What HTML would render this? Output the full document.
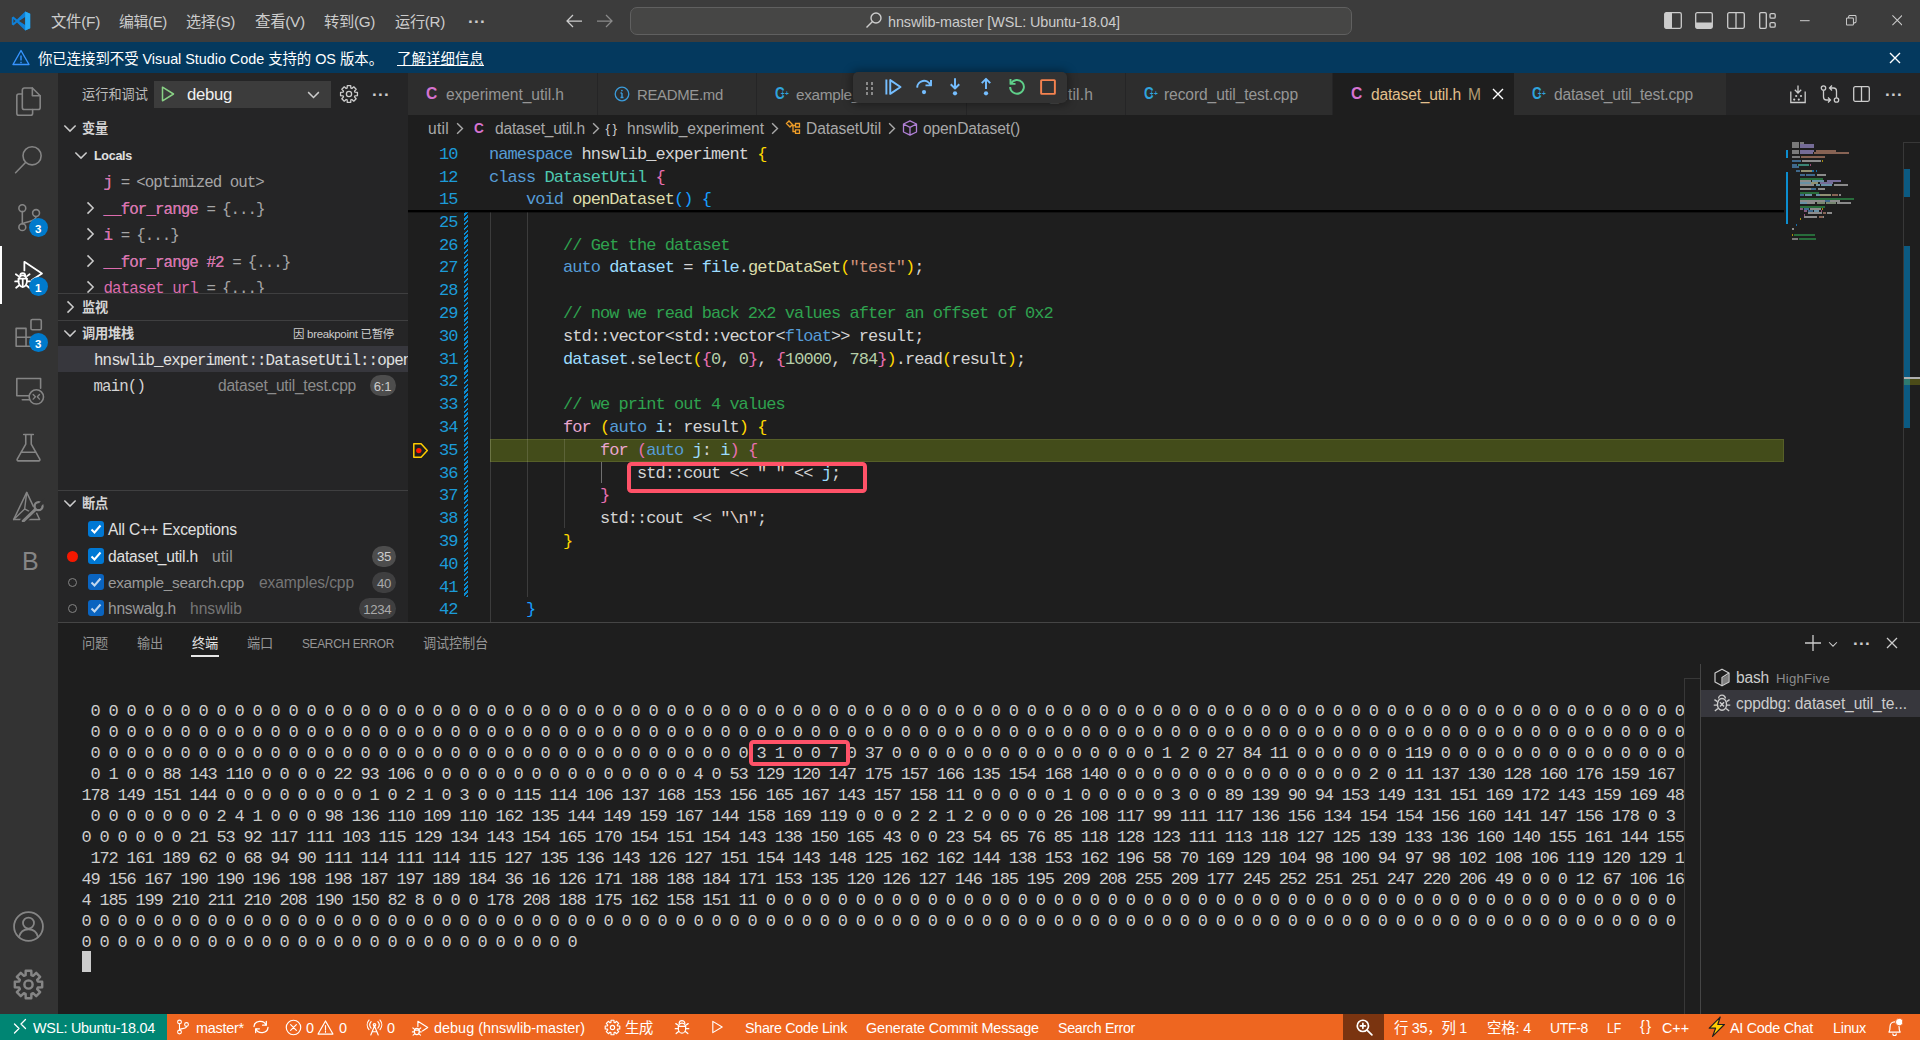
<!DOCTYPE html>
<html lang="zh-CN"><head><meta charset="utf-8"><title>dataset_util.h - hnswlib-master [WSL: Ubuntu-18.04] - Visual Studio Code</title>
<style>
html,body{margin:0;padding:0;background:#1e1e1e;}
body{width:1920px;height:1040px;position:relative;overflow:hidden;font-family:'Liberation Sans','Noto Sans CJK SC',sans-serif;}
body div,body span,body svg,body pre{position:absolute;}
span,pre{white-space:pre;margin:0;}
span span{position:static;}
</style></head><body>
<div style="left:0px;top:0px;width:1920px;height:42px;background:#3c3c3c;"></div>
<svg style="left:10.500px;top:10.800px" width="20" height="20" viewBox="0 0 100 100"><path d="M71 3 30 42 12 28 4 32v36l8 4 18-14 41 39 25-11V14zM12 60V40l11 10zm59 10L40 50l31-20z" fill="#0f80d8"/><path d="M71 3 96 14v72L71 97z" fill="#27aaf5"/></svg>
<span style="left:51px;top:11.0px;font-size:15.41px;line-height:22px;color:#cccccc;letter-spacing:-0.3px;">文件(F)</span>
<span style="left:119px;top:11.0px;font-size:14.85px;line-height:22px;color:#cccccc;letter-spacing:-0.3px;">编辑(E)</span>
<span style="left:186px;top:11.0px;font-size:15.15px;line-height:22px;color:#cccccc;letter-spacing:-0.3px;">选择(S)</span>
<span style="left:255px;top:11.0px;font-size:15.45px;line-height:22px;color:#cccccc;letter-spacing:-0.3px;">查看(V)</span>
<span style="left:324px;top:11.0px;font-size:15.25px;line-height:22px;color:#cccccc;letter-spacing:-0.3px;">转到(G)</span>
<span style="left:395px;top:11.0px;font-size:15.2px;line-height:22px;color:#cccccc;letter-spacing:-0.3px;">运行(R)</span>
<span style="left:468px;top:9.5px;font-size:17px;line-height:24px;color:#cccccc;letter-spacing:0.300px;font-weight:700;">···</span>
<svg style="left:565px;top:13px" width="18" height="16" viewBox="0 0 18 16" fill="none" stroke="#cccccc" stroke-width="1.250"><path d="M8 2 2 8l6 6M2 8h15"/></svg>
<svg style="left:596px;top:13px" width="18" height="16" viewBox="0 0 18 16" fill="none" stroke="#8a8a8a" stroke-width="1.250"><path d="M10 2l6 6-6 6M16 8H1"/></svg>
<div style="left:630px;top:7px;width:722px;height:28px;background:#464645;border:1px solid #606060;border-radius:7px;box-sizing:border-box;"></div>
<svg style="left:865px;top:11px" width="18" height="18" viewBox="0 0 18 18" fill="none" stroke="#cccccc" stroke-width="1.4"><circle cx="11" cy="7" r="5"/><path d="M7.5 10.5 1.5 16.5"/></svg>
<span style="left:888px;top:12.0px;font-size:14.4px;line-height:20px;color:#cccccc;letter-spacing:-0.093px;">hnswlib-master [WSL: Ubuntu-18.04]</span>
<svg style="left:1664px;top:12px" width="18" height="17" viewBox="0 0 18 17" fill="none" stroke="#cccccc" stroke-width="1.3"><rect x=".7" y=".7" width="16.6" height="15.6" rx="1.5"/><rect x="1" y="1" width="7" height="15" fill="#cccccc" stroke="none"/></svg>
<svg style="left:1695px;top:12px" width="18" height="17" viewBox="0 0 18 17" fill="none" stroke="#cccccc" stroke-width="1.3"><rect x=".7" y=".7" width="16.6" height="15.6" rx="1.5"/><rect x="1" y="10.500" width="16" height="5.500" fill="#cccccc" stroke="none"/></svg>
<svg style="left:1727px;top:12px" width="18" height="17" viewBox="0 0 18 17" fill="none" stroke="#cccccc" stroke-width="1.3"><rect x=".7" y=".7" width="16.6" height="15.6" rx="1.5"/><path d="M9 1v15"/></svg>
<svg style="left:1759px;top:12px" width="18" height="17" viewBox="0 0 18 17" fill="none" stroke="#cccccc" stroke-width="1.3"><rect x=".7" y=".7" width="6.6" height="15.6" rx="1.2"/><rect x="11" y="1.600" width="5.200" height="4.600" rx="1.200"/><rect x="11" y="10.600" width="5.200" height="4.600" rx="1.200"/></svg>
<svg style="left:1800px;top:15px" width="10.500" height="10.500" viewBox="0 0 12 12" stroke="#cccccc" stroke-width="1.150"><path d="M0 6.5h11"/></svg>
<svg style="left:1846px;top:15px" width="10.500" height="10.500" viewBox="0 0 12 12" fill="none" stroke="#cccccc" stroke-width="1.150"><rect x=".5" y="3.5" width="8" height="8" rx="1"/><path d="M3 3.5V2a1.5 1.5 0 0 1 1.5-1.5H10A1.5 1.5 0 0 1 11.500 2v5.500A1.500 1.500 0 0 1 10 9H8.500"/></svg>
<svg style="left:1891.800px;top:15px" width="10.500" height="10.500" viewBox="0 0 12 12" stroke="#cccccc" stroke-width="1.150"><path d="M.5.5l11 11M11.500.5l-11 11"/></svg>
<div style="left:0px;top:42px;width:1920px;height:31px;background:#04395e;"></div>
<svg style="left:12px;top:49px" width="18" height="17" viewBox="0 0 18 17" fill="none" stroke="#3794ff" stroke-width="1.4" stroke-linejoin="round"><path d="M9 1.500 17 15.500H1z"/><path d="M9 6.500v5M9 12.700v1.500"/></svg>
<span style="left:38px;top:49.0px;font-size:14.4px;line-height:20px;color:#ffffff;letter-spacing:-0.027px;">你已连接到不受 Visual Studio Code 支持的 OS 版本。</span>
<span style="left:397px;top:49.0px;font-size:14.4px;line-height:20px;color:#ffffff;letter-spacing:0.107px;text-decoration:underline;">了解详细信息</span>
<svg style="left:1889px;top:52px" width="12" height="12" viewBox="0 0 12 12" stroke="#ffffff" stroke-width="1.4"><path d="M1 1l10 10M11 1 1 11"/></svg>
<div style="left:0px;top:73px;width:58px;height:941px;background:#333333;"></div>
<svg style="left:12.3px;top:85.3px" width="33" height="33" viewBox="0 0 24 24" fill="none" stroke="#858585" stroke-width="1.15" stroke-linejoin="round" stroke-linecap="round"><path d="M14.800 2.200H9A1.500 1.500 0 0 0 7.500 3.700V16.300A1.500 1.500 0 0 0 9 17.800H19A1.500 1.500 0 0 0 20.500 16.300V7.800z"/><path d="M14.800 2.200V7.800H20.500"/><path d="M7.500 6.500H5A1.500 1.500 0 0 0 3.500 8V20.500A1.500 1.500 0 0 0 5 22H13.500A1.500 1.500 0 0 0 15 20.500V17.800"/></svg>
<svg style="left:12.3px;top:142.9px" width="33" height="33" viewBox="0 0 24 24" fill="none" stroke="#858585" stroke-width="1.15" stroke-linejoin="round" stroke-linecap="round"><circle cx="14.600" cy="9.300" r="6.600"/><path d="M10 14 2.600 21.600"/></svg>
<svg style="left:12.3px;top:200.5px" width="33" height="33" viewBox="0 0 24 24" fill="none" stroke="#858585" stroke-width="1.15" stroke-linejoin="round" stroke-linecap="round"><circle cx="7.500" cy="5.200" r="2.500"/><circle cx="7.500" cy="19" r="2.500"/><circle cx="17.500" cy="8.800" r="2.500"/><path d="M7.500 7.700v8.800M17.500 11.300c0 3.500-5 3.200-10 5.200"/></svg>
<div style="left:29.0px;top:217.5px;width:19px;height:19px;background:#007acc;border-radius:50%;"></div>
<span style="left:34.9px;top:221.5px;font-size:11.5px;line-height:14px;color:#ffffff;font-weight:700;">3</span>
<div style="left:0px;top:246px;width:2px;height:57.6px;background:#ffffff;"></div>
<svg style="left:12.3px;top:258.1px" width="33" height="33" viewBox="0 0 24 24" fill="none" stroke="#ffffff" stroke-width="1.3" stroke-linejoin="round" stroke-linecap="round"><path d="M9 9V2.800L21.800 11.200 14.500 16"/><ellipse cx="7.800" cy="16.800" rx="3.100" ry="4.200"/><path d="M4.700 15h6.200M7.800 15v6M4.700 13.200 2.800 11.800M10.900 13.200l1.900-1.400M4.700 17H2.300M10.900 17h2.400M5 20l-2 1.600M10.600 20l2 1.600M6 12.800a1.800 1.800 0 0 1 3.600 0"/></svg>
<div style="left:29.0px;top:276.5px;width:19px;height:19px;background:#007acc;border-radius:50%;"></div>
<span style="left:34.9px;top:280.5px;font-size:11.5px;line-height:14px;color:#ffffff;font-weight:700;">1</span>
<svg style="left:12.3px;top:315.7px" width="33" height="33" viewBox="0 0 24 24" fill="none" stroke="#858585" stroke-width="1.15" stroke-linejoin="round" stroke-linecap="round"><path d="M3 9h7.200v6.500H3zM3 15.500h7.200V22H3zM10.200 15.500h7V22h-7z"/><rect x="13.800" y="2.500" width="7.500" height="7.500" rx="1"/></svg>
<div style="left:29.0px;top:333.0px;width:19px;height:19px;background:#007acc;border-radius:50%;"></div>
<span style="left:34.9px;top:337.0px;font-size:11.5px;line-height:14px;color:#ffffff;font-weight:700;">3</span>
<svg style="left:12.3px;top:373.3px" width="33" height="33" viewBox="0 0 24 24" fill="none" stroke="#858585" stroke-width="1.15" stroke-linejoin="round" stroke-linecap="round"><path d="M15 16.500H3.500V4h17.300v7"/><path d="M7.500 19.500H12.500"/><circle cx="17.700" cy="17.400" r="5.200" fill="#333333"/><path d="M15.400 15.600l1.600 1.700-1.600 1.700M20 15.600l-1.600 1.700 1.600 1.700" stroke-width="1"/></svg>
<svg style="left:12.3px;top:430.9px" width="33" height="33" viewBox="0 0 24 24" fill="none" stroke="#858585" stroke-width="1.15" stroke-linejoin="round" stroke-linecap="round"><path d="M8.500 2.500h7M10 2.500v7L3.800 20.500a.8.800 0 0 0 .7 1.200h15a.8.800 0 0 0 .7-1.200L14 9.500v-7M6.500 15.500h11"/></svg>
<svg style="left:12.3px;top:488.5px" width="33" height="33" viewBox="0 0 24 24" fill="none" stroke="#858585" stroke-width="1.15" stroke-linejoin="round" stroke-linecap="round"><path d="M10.700 2.500 1.200 22.200H20.100z" stroke-width="1.100"/><path d="M10.700 2.500 9.200 14.500 1.200 22.200M9.200 14.500l7 3.700" stroke-width="1"/><path d="M8.200 23.300 17.300 14.600" stroke="#333333" stroke-width="4.600"/><path d="M8.200 23.300 17.300 14.600" stroke-width="2.200"/><circle cx="19.300" cy="12.500" r="2.900" fill="#333333" stroke-width="1.700"/><path d="M19.800 12 23.500 8.300" stroke="#333333" stroke-width="2.600"/></svg>
<span style="left:22px;top:546.1px;font-size:25px;line-height:30px;color:#858585;">B</span>
<svg style="left:12.3px;top:909.5px" width="33" height="33" viewBox="0 0 24 24" fill="none" stroke="#858585" stroke-width="1.3" stroke-linejoin="round" stroke-linecap="round"><circle cx="12" cy="12" r="10.500"/><circle cx="12" cy="9.500" r="4"/><path d="M5 19.800c1-4 4-5.800 7-5.800s6 1.800 7 5.800"/></svg>
<svg style="left:13.3px;top:968.5px" width="31" height="31" viewBox="0 0 24 24" fill="none" stroke="#858585" stroke-width="1.9" stroke-linejoin="round" stroke-linecap="round"><path d="M9.75 4.74 L9.85 1.42 L14.15 1.42 L14.25 4.74 L15.55 5.28 L17.97 3.00 L21.00 6.03 L18.72 8.45 L19.26 9.75 L22.58 9.85 L22.58 14.15 L19.26 14.25 L18.72 15.55 L21.00 17.97 L17.97 21.00 L15.55 18.72 L14.25 19.26 L14.15 22.58 L9.85 22.58 L9.75 19.26 L8.45 18.72 L6.03 21.00 L3.00 17.97 L5.28 15.55 L4.74 14.25 L1.42 14.15 L1.42 9.85 L4.74 9.75 L5.28 8.45 L3.00 6.03 L6.03 3.00 L8.45 5.28Z" stroke-width="1.900"/><path d="M12 8.800a3.200 3.200 0 1 0 0 6.400 3.200 3.200 0 0 0 0-6.400z" stroke-width="1.900"/></svg>
<div style="left:58px;top:73px;width:350px;height:549px;background:#252526;"></div>
<span style="left:82px;top:86.0px;font-size:13.2px;line-height:18px;color:#bbbbbb;letter-spacing:0.013px;">运行和调试</span>
<div style="left:154px;top:81px;width:177px;height:27px;background:#3c3c3c;"></div>
<svg style="left:160px;top:85px" width="16" height="18" viewBox="0 0 16 18" fill="none" stroke="#89d185" stroke-width="1.500" stroke-linejoin="round"><path d="M2.500 2.200v13.600L13.500 9z"/></svg>
<span style="left:187px;top:83.0px;font-size:16.72px;line-height:24px;color:#f0f0f0;letter-spacing:-0.3px;">debug</span>
<svg style="left:304.0px;top:84.5px" width="19" height="19" viewBox="0 0 16 16" fill="none" stroke="#cccccc" stroke-width="1.200"><path d="M3.500 6l4.500 4.500L12.500 6"/></svg>
<svg style="left:339px;top:84px" width="20" height="20" viewBox="0 0 20 20" fill="none" stroke="#cccccc" stroke-width="1.300" stroke-linejoin="round"><path d="M8.17 4.08 L8.29 1.57 L11.71 1.57 L11.83 4.08 L12.89 4.52 L14.75 2.83 L17.17 5.25 L15.48 7.11 L15.92 8.17 L18.43 8.29 L18.43 11.71 L15.92 11.83 L15.48 12.89 L17.17 14.75 L14.75 17.17 L12.89 15.48 L11.83 15.92 L11.71 18.43 L8.29 18.43 L8.17 15.92 L7.11 15.48 L5.25 17.17 L2.83 14.75 L4.52 12.89 L4.08 11.83 L1.57 11.71 L1.57 8.29 L4.08 8.17 L4.52 7.11 L2.83 5.25 L5.25 2.83 L7.11 4.52Z"/><circle cx="10" cy="10" r="2.600"/></svg>
<span style="left:372px;top:82.5px;font-size:17px;line-height:24px;color:#cccccc;letter-spacing:0.300px;font-weight:700;">···</span>
<svg style="left:60.0px;top:118.0px" width="20" height="20" viewBox="0 0 16 16" fill="none" stroke="#cccccc" stroke-width="1.200"><path d="M3.500 6l4.500 4.500L12.500 6"/></svg>
<span style="left:82px;top:120.0px;font-size:13.2px;line-height:18px;color:#d4d4d4;font-weight:700;letter-spacing:-0.188px;">变量</span>
<svg style="left:71.0px;top:145.0px" width="20" height="20" viewBox="0 0 16 16" fill="none" stroke="#cccccc" stroke-width="1.200"><path d="M3.500 6l4.500 4.500L12.500 6"/></svg>
<span style="left:94px;top:147.0px;font-size:12.57px;line-height:18px;color:#e0e0e0;font-weight:700;letter-spacing:-0.3px;">Locals</span>
<span style="left:103.5px;top:171.8px;font-size:15.8px;line-height:22px;color:#a6a6a6;font-family:'Liberation Mono','Noto Sans CJK SC',monospace;letter-spacing:-0.900px;">j =</span>
<span style="left:103.5px;top:171.8px;font-size:15.8px;line-height:22px;color:#dd6cae;font-family:'Liberation Mono','Noto Sans CJK SC',monospace;letter-spacing:-0.900px;">j</span>
<span style="left:136.22px;top:171.8px;font-size:15.8px;line-height:22px;color:#a6a6a6;font-family:'Liberation Mono','Noto Sans CJK SC',monospace;letter-spacing:-0.980px;">&lt;optimized out&gt;</span>
<svg style="left:80.0px;top:198.0px" width="20" height="20" viewBox="0 0 16 16" fill="none" stroke="#cccccc" stroke-width="1.200"><path d="M6 3.500l4.500 4.500L6 12.500"/></svg>
<span style="left:103.5px;top:198.8px;font-size:15.8px;line-height:22px;color:#a6a6a6;font-family:'Liberation Mono','Noto Sans CJK SC',monospace;letter-spacing:-0.900px;">__for_range =</span>
<span style="left:103.5px;top:198.8px;font-size:15.8px;line-height:22px;color:#dd6cae;font-family:'Liberation Mono','Noto Sans CJK SC',monospace;letter-spacing:-0.900px;">__for_range</span>
<span style="left:222.02px;top:198.8px;font-size:15.8px;line-height:22px;color:#a6a6a6;font-family:'Liberation Mono','Noto Sans CJK SC',monospace;letter-spacing:-0.980px;">{...}</span>
<svg style="left:80.0px;top:224.0px" width="20" height="20" viewBox="0 0 16 16" fill="none" stroke="#cccccc" stroke-width="1.200"><path d="M6 3.500l4.500 4.500L6 12.500"/></svg>
<span style="left:103.5px;top:224.8px;font-size:15.8px;line-height:22px;color:#a6a6a6;font-family:'Liberation Mono','Noto Sans CJK SC',monospace;letter-spacing:-0.900px;">i =</span>
<span style="left:103.5px;top:224.8px;font-size:15.8px;line-height:22px;color:#dd6cae;font-family:'Liberation Mono','Noto Sans CJK SC',monospace;letter-spacing:-0.900px;">i</span>
<span style="left:136.22px;top:224.8px;font-size:15.8px;line-height:22px;color:#a6a6a6;font-family:'Liberation Mono','Noto Sans CJK SC',monospace;letter-spacing:-0.980px;">{...}</span>
<svg style="left:80.0px;top:251.0px" width="20" height="20" viewBox="0 0 16 16" fill="none" stroke="#cccccc" stroke-width="1.200"><path d="M6 3.500l4.500 4.500L6 12.500"/></svg>
<span style="left:103.5px;top:251.8px;font-size:15.8px;line-height:22px;color:#a6a6a6;font-family:'Liberation Mono','Noto Sans CJK SC',monospace;letter-spacing:-0.900px;">__for_range #2 =</span>
<span style="left:103.5px;top:251.8px;font-size:15.8px;line-height:22px;color:#dd6cae;font-family:'Liberation Mono','Noto Sans CJK SC',monospace;letter-spacing:-0.900px;">__for_range #2</span>
<span style="left:247.76000000000002px;top:251.8px;font-size:15.8px;line-height:22px;color:#a6a6a6;font-family:'Liberation Mono','Noto Sans CJK SC',monospace;letter-spacing:-0.980px;">{...}</span>
<div style="left:58px;top:274px;width:350px;height:19px;overflow:hidden">
<svg style="left:22px;top:3px" width="20" height="20" viewBox="0 0 16 16" fill="none" stroke="#cccccc" stroke-width="1.200"><path d="M6 3.500l4.500 4.500L6 12.500"/></svg>
<span style="left:45.500px;top:4.800px;font-size:15.8px;line-height:20px;color:#a6a6a6;font-family:'Liberation Mono','Noto Sans CJK SC',monospace;letter-spacing:-0.900px"><span style="color:#dd6cae">dataset_url</span> =<span style="margin-left:7px;letter-spacing:-0.980px">{...}</span></span>
</div>
<div style="left:58px;top:293px;width:350px;height:1px;background:#3f3f40;"></div>
<svg style="left:60.0px;top:296.5px" width="20" height="20" viewBox="0 0 16 16" fill="none" stroke="#cccccc" stroke-width="1.200"><path d="M6 3.500l4.500 4.500L6 12.500"/></svg>
<span style="left:82px;top:298.5px;font-size:13.2px;line-height:18px;color:#d4d4d4;font-weight:700;letter-spacing:-0.188px;">监视</span>
<div style="left:58px;top:319.5px;width:350px;height:1px;background:#3f3f40;"></div>
<svg style="left:60.0px;top:323.0px" width="20" height="20" viewBox="0 0 16 16" fill="none" stroke="#cccccc" stroke-width="1.200"><path d="M3.500 6l4.500 4.500L12.500 6"/></svg>
<span style="left:82px;top:325.0px;font-size:13.2px;line-height:18px;color:#d4d4d4;font-weight:700;letter-spacing:-0.188px;">调用堆栈</span>
<span style="left:293px;top:325.5px;font-size:11.47px;line-height:17px;color:#cccccc;letter-spacing:-0.3px;">因 breakpoint 已暂停</span>
<div style="left:58px;top:346px;width:350px;height:26px;background:#37373d;"></div>
<div style="left:94px;top:346px;width:314px;height:26px;overflow:hidden"><span style="left:0;top:5.300px;font-size:15.8px;line-height:20px;color:#e0e0e0;font-family:'Liberation Mono','Noto Sans CJK SC',monospace;letter-spacing:-0.900px">hnswlib_experiment::DatasetUtil::openDataset()</span></div>
<span style="left:93.5px;top:376.0px;font-size:15.8px;line-height:22px;color:#d4d4d4;font-family:'Liberation Mono','Noto Sans CJK SC',monospace;letter-spacing:-0.900px;">main()</span>
<span style="left:218px;top:375.0px;font-size:15.6px;line-height:22px;color:#8c8c8c;letter-spacing:-0.24px;">dataset_util_test.cpp</span>
<div style="left:369.5px;top:375.0px;width:26.0px;height:21px;background:#4d4d4d;border-radius:10.500px;"></div>
<span style="left:369.5px;top:377.5px;font-size:13.2px;line-height:18px;color:#cccccc;width:26.0px;text-align:center;letter-spacing:-0.300px;">6:1</span>
<div style="left:58px;top:490px;width:350px;height:1px;background:#3f3f40;"></div>
<svg style="left:60.0px;top:493.0px" width="20" height="20" viewBox="0 0 16 16" fill="none" stroke="#cccccc" stroke-width="1.200"><path d="M3.500 6l4.500 4.500L12.500 6"/></svg>
<span style="left:82px;top:495.0px;font-size:13.2px;line-height:18px;color:#d4d4d4;font-weight:700;letter-spacing:-0.188px;">断点</span>
<div style="left:88px;top:521px;width:16px;height:16px;background:#0078d4;border-radius:3px;"></div>
<svg style="left:88px;top:521px;opacity:1" width="16" height="16" viewBox="0 0 16 16" fill="none" stroke="#ffffff" stroke-width="2"><path d="M3.500 8.500l3 3L12.500 4.500"/></svg>
<span style="left:108px;top:519.0px;font-size:15.6px;line-height:22px;color:#e0e0e0;letter-spacing:-0.153px;">All C++ Exceptions</span>
<div style="left:66.5px;top:550.5px;width:11px;height:11px;background:#f51800;border-radius:50%;"></div>
<div style="left:88px;top:548px;width:16px;height:16px;background:#0078d4;border-radius:3px;"></div>
<svg style="left:88px;top:548px;opacity:1" width="16" height="16" viewBox="0 0 16 16" fill="none" stroke="#ffffff" stroke-width="2"><path d="M3.500 8.500l3 3L12.500 4.500"/></svg>
<span style="left:108px;top:546.0px;font-size:15.6px;line-height:22px;color:#e0e0e0;letter-spacing:-0.198px;">dataset_util.h</span>
<span style="left:212px;top:546.0px;font-size:15.6px;line-height:22px;color:#999999;letter-spacing:0.266px;">util</span>
<div style="left:372px;top:545.5px;width:24px;height:21px;background:#4d4d4d;border-radius:10.500px;"></div>
<span style="left:372px;top:548.0px;font-size:13.2px;line-height:18px;color:#cccccc;width:24px;text-align:center;letter-spacing:-0.300px;">35</span>
<div style="left:68px;top:578px;width:7px;height:7px;background:transparent;border:1.500px solid #848484;border-radius:50%;"></div>
<div style="left:88px;top:574px;width:16px;height:16px;background:#0a64c0;border-radius:3px;"></div>
<svg style="left:88px;top:574px;opacity:0.75" width="16" height="16" viewBox="0 0 16 16" fill="none" stroke="#ffffff" stroke-width="2"><path d="M3.500 8.500l3 3L12.500 4.500"/></svg>
<span style="left:108px;top:572.0px;font-size:15.33px;line-height:22px;color:#9a9a9a;letter-spacing:-0.3px;">example_search.cpp</span>
<span style="left:259px;top:572.0px;font-size:15.6px;line-height:22px;color:#767676;letter-spacing:-0.102px;">examples/cpp</span>
<div style="left:372px;top:572.0px;width:24px;height:21px;background:#3f3f40;border-radius:10.500px;"></div>
<span style="left:372px;top:574.5px;font-size:13.2px;line-height:18px;color:#aaaaaa;width:24px;text-align:center;letter-spacing:-0.300px;">40</span>
<div style="left:68px;top:604px;width:7px;height:7px;background:transparent;border:1.500px solid #848484;border-radius:50%;"></div>
<div style="left:88px;top:600px;width:16px;height:16px;background:#0a64c0;border-radius:3px;"></div>
<svg style="left:88px;top:600px;opacity:0.75" width="16" height="16" viewBox="0 0 16 16" fill="none" stroke="#ffffff" stroke-width="2"><path d="M3.500 8.500l3 3L12.500 4.500"/></svg>
<span style="left:108px;top:598.0px;font-size:15.6px;line-height:22px;color:#9a9a9a;letter-spacing:-0.247px;">hnswalg.h</span>
<span style="left:190px;top:598.0px;font-size:15.6px;line-height:22px;color:#767676;letter-spacing:-0.002px;">hnswlib</span>
<div style="left:358.5px;top:598.0px;width:37.5px;height:21px;background:#3f3f40;border-radius:10.500px;"></div>
<span style="left:358.5px;top:600.5px;font-size:13.2px;line-height:18px;color:#aaaaaa;width:37.5px;text-align:center;letter-spacing:-0.300px;">1234</span>
<div style="left:408px;top:73px;width:1512px;height:42px;background:#252526;"></div>
<div style="left:408px;top:73px;width:189px;height:42px;background:#2d2d2d;"></div>
<span style="left:425.7px;top:82.0px;font-size:16.8px;line-height:24px;color:#d673d0;font-weight:700;transform:scaleX(.93);transform-origin:0 50%;">C</span>
<span style="left:446px;top:84.0px;font-size:15.6px;line-height:22px;color:#969696;letter-spacing:-0.045px;">experiment_util.h</span>
<div style="left:598px;top:73px;width:158px;height:42px;background:#2d2d2d;"></div>
<svg style="left:614px;top:86px" width="16" height="16" viewBox="0 0 16 16" fill="none" stroke="#3b9bd9" stroke-width="1.300"><circle cx="8" cy="8" r="6.800"/><path d="M8 7v4.500M6.500 7H8M6.500 11.500h3" stroke-width="1.400"/><circle cx="7.900" cy="4.600" r=".9" fill="#3b9bd9" stroke="none"/></svg>
<span style="left:637px;top:84.0px;font-size:14.92px;line-height:22px;color:#969696;letter-spacing:-0.3px;">README.md</span>
<div style="left:757px;top:73px;width:209px;height:42px;background:#2d2d2d;"></div>
<span style="left:774.9000000000001px;top:81.8px;font-size:16.8px;line-height:24px;color:#2fa3dc;font-weight:700;transform:scaleX(.8);transform-origin:0 50%;">C</span>
<span style="left:780.7px;top:89.8px;font-size:6.5px;line-height:8px;color:#2fa3dc;font-weight:700;">+</span>
<span style="left:785.0px;top:89.8px;font-size:6.5px;line-height:8px;color:#2fa3dc;font-weight:700;">+</span>
<span style="left:796px;top:84.0px;font-size:15.33px;line-height:22px;color:#969696;letter-spacing:-0.3px;">example_search.cpp</span>
<div style="left:967px;top:73px;width:158px;height:42px;background:#2d2d2d;"></div>
<span style="left:984.7px;top:82.0px;font-size:16.8px;line-height:24px;color:#d673d0;font-weight:700;transform:scaleX(.93);transform-origin:0 50%;">C</span>
<span style="left:1005px;top:84.0px;font-size:15.6px;line-height:22px;color:#969696;letter-spacing:0.168px;">record_util.h</span>
<div style="left:1126px;top:73px;width:206px;height:42px;background:#2d2d2d;"></div>
<span style="left:1143.9px;top:81.8px;font-size:16.8px;line-height:24px;color:#2fa3dc;font-weight:700;transform:scaleX(.8);transform-origin:0 50%;">C</span>
<span style="left:1149.7px;top:89.8px;font-size:6.5px;line-height:8px;color:#2fa3dc;font-weight:700;">+</span>
<span style="left:1154.0px;top:89.8px;font-size:6.5px;line-height:8px;color:#2fa3dc;font-weight:700;">+</span>
<span style="left:1164px;top:84.0px;font-size:15.6px;line-height:22px;color:#969696;letter-spacing:-0.105px;">record_util_test.cpp</span>
<div style="left:1333px;top:73px;width:181px;height:42px;background:#1e1e1e;"></div>
<span style="left:1350.9px;top:82.0px;font-size:16.8px;line-height:24px;color:#d673d0;font-weight:700;transform:scaleX(.93);transform-origin:0 50%;">C</span>
<span style="left:1371px;top:84.0px;font-size:15.6px;line-height:22px;color:#e2c08d;letter-spacing:-0.198px;">dataset_util.h</span>
<div style="left:1514px;top:73px;width:212px;height:42px;background:#2d2d2d;"></div>
<span style="left:1531.9px;top:81.8px;font-size:16.8px;line-height:24px;color:#2fa3dc;font-weight:700;transform:scaleX(.8);transform-origin:0 50%;">C</span>
<span style="left:1537.7px;top:89.8px;font-size:6.5px;line-height:8px;color:#2fa3dc;font-weight:700;">+</span>
<span style="left:1542.0px;top:89.8px;font-size:6.5px;line-height:8px;color:#2fa3dc;font-weight:700;">+</span>
<span style="left:1554px;top:84.0px;font-size:15.6px;line-height:22px;color:#969696;letter-spacing:-0.193px;">dataset_util_test.cpp</span>
<span style="left:1468px;top:84.0px;font-size:15.6px;line-height:22px;color:#b39a72;">M</span>
<svg style="left:1491px;top:87px" width="14" height="14" viewBox="0 0 14 14" stroke="#ffffff" stroke-width="1.400"><path d="M2 2l10 10M12 2 2 12"/></svg>
<svg style="left:1788px;top:84px" width="20" height="20" viewBox="0 0 20 20" fill="none" stroke="#cccccc" stroke-width="1.300"><path d="M10 1.500v7.500M6.800 5.800 10 9l3.200-3.200M2.800 7.500v11h14.400v-11"/><g fill="#cccccc" stroke="none"><circle cx="8.200" cy="12" r="1.100"/><circle cx="13" cy="12" r="1.100"/><circle cx="6.200" cy="15.600" r="1.100"/><circle cx="10.800" cy="15.600" r="1.100"/></g></svg>
<svg style="left:1819px;top:84px" width="22" height="20" viewBox="0 0 22 20" fill="none" stroke="#cccccc" stroke-width="1.300"><circle cx="4.500" cy="4" r="2.200"/><circle cx="17.500" cy="16" r="2.200"/><path d="M4.500 6.200V13a3 3 0 0 0 3 3h3.500M9 13.500l2.500 2.500L9 18.500M17.500 13.800V7a3 3 0 0 0-3-3H11M13 1.500 10.500 4 13 6.500"/></svg>
<svg style="left:1853px;top:86px" width="17" height="16" viewBox="0 0 17 16" fill="none" stroke="#cccccc" stroke-width="1.300"><rect x=".7" y=".7" width="15.600" height="14.600" rx="1.500"/><path d="M8.500 1v14"/></svg>
<span style="left:1885px;top:82.5px;font-size:17px;line-height:24px;color:#cccccc;letter-spacing:0.300px;font-weight:700;">···</span>
<div style="left:408px;top:115px;width:1512px;height:26px;background:#1e1e1e;"></div>
<span style="left:428px;top:118.0px;font-size:15.6px;line-height:22px;color:#a9a9a9;letter-spacing:0.266px;">util</span>
<svg style="left:449.5px;top:119.0px" width="19" height="19" viewBox="0 0 16 16" fill="none" stroke="#a9a9a9" stroke-width="1.200"><path d="M6 3.500l4.500 4.500L6 12.500"/></svg>
<span style="left:473.5px;top:117.8px;font-size:14.6px;line-height:20px;color:#d673d0;font-weight:700;transform:scaleX(.93);transform-origin:0 50%;">C</span>
<span style="left:495px;top:118.0px;font-size:15.6px;line-height:22px;color:#a9a9a9;letter-spacing:-0.198px;">dataset_util.h</span>
<svg style="left:585.5px;top:119.0px" width="19" height="19" viewBox="0 0 16 16" fill="none" stroke="#a9a9a9" stroke-width="1.200"><path d="M6 3.500l4.500 4.500L6 12.500"/></svg>
<span style="left:605.5px;top:119.0px;font-size:13.5px;line-height:19px;color:#cccccc;letter-spacing:2.500px;">{}</span>
<span style="left:627px;top:118.0px;font-size:15.6px;line-height:22px;color:#a9a9a9;letter-spacing:-0.046px;">hnswlib_experiment</span>
<svg style="left:764.5px;top:119.0px" width="19" height="19" viewBox="0 0 16 16" fill="none" stroke="#a9a9a9" stroke-width="1.200"><path d="M6 3.500l4.500 4.500L6 12.500"/></svg>
<svg style="left:784px;top:119px" width="18" height="18" viewBox="0 0 18 18" fill="none" stroke="#ee9d28" stroke-width="1.300"><path d="M2.500 4.500 5 2l3.500 3.500L6 8zM6.500 6.500h5M9 6.500v6h2.500M11.500 4.500h4v3.500h-4zM11.500 10.800h4v3.500h-4z"/></svg>
<span style="left:806px;top:118.0px;font-size:15.6px;line-height:22px;color:#a9a9a9;letter-spacing:-0.115px;">DatasetUtil</span>
<svg style="left:881.5px;top:119.0px" width="19" height="19" viewBox="0 0 16 16" fill="none" stroke="#a9a9a9" stroke-width="1.200"><path d="M6 3.500l4.500 4.500L6 12.500"/></svg>
<svg style="left:901px;top:119px" width="18" height="18" viewBox="0 0 18 18" fill="none" stroke="#b180d7" stroke-width="1.300" stroke-linejoin="round"><path d="M9 1.800 15.500 5v8L9 16.200 2.500 13V5zM2.500 5 9 8.300 15.500 5M9 8.300v7.900"/></svg>
<span style="left:923px;top:118.0px;font-size:15.6px;line-height:22px;color:#a9a9a9;letter-spacing:-0.141px;">openDataset()</span>
<div style="left:490px;top:439px;width:1294px;height:23px;background:#434c1a;border:1px solid #565f28;box-sizing:border-box;"></div>
<div style="left:490px;top:210px;width:1px;height:412px;background:rgba(255,255,255,.135);"></div>
<div style="left:527px;top:210px;width:1px;height:386.70000000000005px;background:rgba(255,255,255,.135);"></div>
<div style="left:564px;top:439px;width:1px;height:89.29999999999995px;background:rgba(255,255,255,.135);"></div>
<div style="left:601px;top:462px;width:1px;height:20.700000000000045px;background:#707070;"></div>
<div style="left:464px;top:210px;width:4px;height:386.7px;background:repeating-linear-gradient(-45deg,#0a8ad0 0 1.700px,transparent 1.700px 3.400px)"></div>
<span style="left:439.02px;top:211.8px;font-size:17px;line-height:22px;color:#1c9bd8;font-family:'Liberation Mono','Noto Sans CJK SC',monospace;letter-spacing:-0.960px;">25</span>
<span style="left:439.02px;top:234.6px;font-size:17px;line-height:22px;color:#1c9bd8;font-family:'Liberation Mono','Noto Sans CJK SC',monospace;letter-spacing:-0.960px;">26</span>
<span style="left:489.1px;top:234.6px;font-size:17px;line-height:22px;color:#d4d4d4;font-family:'Liberation Mono','Noto Sans CJK SC',monospace;letter-spacing:-0.960px"><span style="color:#2fa24f">        // Get the dataset</span></span>
<span style="left:439.02px;top:257.4px;font-size:17px;line-height:22px;color:#1c9bd8;font-family:'Liberation Mono','Noto Sans CJK SC',monospace;letter-spacing:-0.960px;">27</span>
<span style="left:489.1px;top:257.4px;font-size:17px;line-height:22px;color:#d4d4d4;font-family:'Liberation Mono','Noto Sans CJK SC',monospace;letter-spacing:-0.960px">        <span style="color:#569cd6">auto</span> <span style="color:#9cdcfe">dataset</span> = <span style="color:#9cdcfe">file</span>.<span style="color:#dcdcaa">getDataSet</span><span style="color:#ffd700">(</span><span style="color:#ce9178">"test"</span><span style="color:#ffd700">)</span>;</span>
<span style="left:439.02px;top:280.2px;font-size:17px;line-height:22px;color:#1c9bd8;font-family:'Liberation Mono','Noto Sans CJK SC',monospace;letter-spacing:-0.960px;">28</span>
<span style="left:439.02px;top:303.0px;font-size:17px;line-height:22px;color:#1c9bd8;font-family:'Liberation Mono','Noto Sans CJK SC',monospace;letter-spacing:-0.960px;">29</span>
<span style="left:489.1px;top:303.0px;font-size:17px;line-height:22px;color:#d4d4d4;font-family:'Liberation Mono','Noto Sans CJK SC',monospace;letter-spacing:-0.960px"><span style="color:#2fa24f">        // now we read back 2x2 values after an offset of 0x2</span></span>
<span style="left:439.02px;top:325.8px;font-size:17px;line-height:22px;color:#1c9bd8;font-family:'Liberation Mono','Noto Sans CJK SC',monospace;letter-spacing:-0.960px;">30</span>
<span style="left:489.1px;top:325.8px;font-size:17px;line-height:22px;color:#d4d4d4;font-family:'Liberation Mono','Noto Sans CJK SC',monospace;letter-spacing:-0.960px">        std::vector&lt;std::vector&lt;<span style="color:#569cd6">float</span>&gt;&gt; result;</span>
<span style="left:439.02px;top:348.6px;font-size:17px;line-height:22px;color:#1c9bd8;font-family:'Liberation Mono','Noto Sans CJK SC',monospace;letter-spacing:-0.960px;">31</span>
<span style="left:489.1px;top:348.6px;font-size:17px;line-height:22px;color:#d4d4d4;font-family:'Liberation Mono','Noto Sans CJK SC',monospace;letter-spacing:-0.960px">        <span style="color:#9cdcfe">dataset</span>.select<span style="color:#ffd700">(</span><span style="color:#e86fb0">{</span><span style="color:#b5cea8">0</span>, <span style="color:#b5cea8">0</span><span style="color:#e86fb0">}</span>, <span style="color:#e86fb0">{</span><span style="color:#b5cea8">10000</span>, <span style="color:#b5cea8">784</span><span style="color:#e86fb0">}</span><span style="color:#ffd700">)</span>.read<span style="color:#ffd700">(</span>result<span style="color:#ffd700">)</span>;</span>
<span style="left:439.02px;top:371.4px;font-size:17px;line-height:22px;color:#1c9bd8;font-family:'Liberation Mono','Noto Sans CJK SC',monospace;letter-spacing:-0.960px;">32</span>
<span style="left:439.02px;top:394.2px;font-size:17px;line-height:22px;color:#1c9bd8;font-family:'Liberation Mono','Noto Sans CJK SC',monospace;letter-spacing:-0.960px;">33</span>
<span style="left:489.1px;top:394.2px;font-size:17px;line-height:22px;color:#d4d4d4;font-family:'Liberation Mono','Noto Sans CJK SC',monospace;letter-spacing:-0.960px"><span style="color:#2fa24f">        // we print out 4 values</span></span>
<span style="left:439.02px;top:417.0px;font-size:17px;line-height:22px;color:#1c9bd8;font-family:'Liberation Mono','Noto Sans CJK SC',monospace;letter-spacing:-0.960px;">34</span>
<span style="left:489.1px;top:417.0px;font-size:17px;line-height:22px;color:#d4d4d4;font-family:'Liberation Mono','Noto Sans CJK SC',monospace;letter-spacing:-0.960px">        <span style="color:#eba6cf">for</span> <span style="color:#ffd700">(</span><span style="color:#569cd6">auto</span> <span style="color:#9cdcfe">i</span>: result<span style="color:#ffd700">)</span> <span style="color:#ffd700">{</span></span>
<span style="left:439.02px;top:439.8px;font-size:17px;line-height:22px;color:#1c9bd8;font-family:'Liberation Mono','Noto Sans CJK SC',monospace;letter-spacing:-0.960px;">35</span>
<span style="left:489.1px;top:439.8px;font-size:17px;line-height:22px;color:#d4d4d4;font-family:'Liberation Mono','Noto Sans CJK SC',monospace;letter-spacing:-0.960px">            <span style="color:#eba6cf">for</span> <span style="color:#e86fb0">(</span><span style="color:#569cd6">auto</span> <span style="color:#9cdcfe">j</span>: <span style="color:#9cdcfe">i</span><span style="color:#e86fb0">)</span> <span style="color:#e86fb0">{</span></span>
<span style="left:439.02px;top:462.6px;font-size:17px;line-height:22px;color:#1c9bd8;font-family:'Liberation Mono','Noto Sans CJK SC',monospace;letter-spacing:-0.960px;">36</span>
<span style="left:489.1px;top:462.6px;font-size:17px;line-height:22px;color:#d4d4d4;font-family:'Liberation Mono','Noto Sans CJK SC',monospace;letter-spacing:-0.960px">                std::cout &lt;&lt; <span style="color:#e0d0c8">" "</span> &lt;&lt; <span style="color:#9cdcfe">j</span>;</span>
<span style="left:439.02px;top:485.4px;font-size:17px;line-height:22px;color:#1c9bd8;font-family:'Liberation Mono','Noto Sans CJK SC',monospace;letter-spacing:-0.960px;">37</span>
<span style="left:489.1px;top:485.4px;font-size:17px;line-height:22px;color:#d4d4d4;font-family:'Liberation Mono','Noto Sans CJK SC',monospace;letter-spacing:-0.960px">            <span style="color:#e86fb0">}</span></span>
<span style="left:439.02px;top:508.2px;font-size:17px;line-height:22px;color:#1c9bd8;font-family:'Liberation Mono','Noto Sans CJK SC',monospace;letter-spacing:-0.960px;">38</span>
<span style="left:489.1px;top:508.2px;font-size:17px;line-height:22px;color:#d4d4d4;font-family:'Liberation Mono','Noto Sans CJK SC',monospace;letter-spacing:-0.960px">            std::cout &lt;&lt; <span style="color:#e0d0c8">"\n"</span>;</span>
<span style="left:439.02px;top:531.0px;font-size:17px;line-height:22px;color:#1c9bd8;font-family:'Liberation Mono','Noto Sans CJK SC',monospace;letter-spacing:-0.960px;">39</span>
<span style="left:489.1px;top:531.0px;font-size:17px;line-height:22px;color:#d4d4d4;font-family:'Liberation Mono','Noto Sans CJK SC',monospace;letter-spacing:-0.960px">        <span style="color:#ffd700">}</span></span>
<span style="left:439.02px;top:553.8px;font-size:17px;line-height:22px;color:#1c9bd8;font-family:'Liberation Mono','Noto Sans CJK SC',monospace;letter-spacing:-0.960px;">40</span>
<span style="left:439.02px;top:576.6px;font-size:17px;line-height:22px;color:#1c9bd8;font-family:'Liberation Mono','Noto Sans CJK SC',monospace;letter-spacing:-0.960px;">41</span>
<span style="left:439.02px;top:599.4px;font-size:17px;line-height:22px;color:#1c9bd8;font-family:'Liberation Mono','Noto Sans CJK SC',monospace;letter-spacing:-0.960px;">42</span>
<span style="left:489.1px;top:599.4px;font-size:17px;line-height:22px;color:#d4d4d4;font-family:'Liberation Mono','Noto Sans CJK SC',monospace;letter-spacing:-0.960px">    <span style="color:#179fff">}</span></span>
<svg style="left:412px;top:441.7px" width="18" height="17" viewBox="0 0 18 17" fill="none"><path d="M1.800 1.700h7.300L15.300 8.500 9.100 15.300H1.800z" stroke="#ffcc00" stroke-width="1.500" stroke-linejoin="round"/><circle cx="6.800" cy="8.600" r="2.700" fill="#ff1a00"/></svg>
<div style="left:408px;top:141px;width:1376px;height:69px;background:#1e1e1e;"></div>
<div style="left:408px;top:210px;width:1376px;height:3px;background:linear-gradient(#000000 0,#000000 55%,rgba(0,0,0,0) 100%);"></div>
<span style="left:439.02px;top:143.7px;font-size:17px;line-height:22px;color:#1c9bd8;font-family:'Liberation Mono','Noto Sans CJK SC',monospace;letter-spacing:-0.960px;">10</span>
<span style="left:489.1px;top:143.7px;font-size:17px;line-height:22px;color:#d4d4d4;font-family:'Liberation Mono','Noto Sans CJK SC',monospace;letter-spacing:-0.960px"><span style="color:#569cd6">namespace</span> hnswlib_experiment <span style="color:#ffd700">{</span></span>
<span style="left:439.02px;top:166.5px;font-size:17px;line-height:22px;color:#1c9bd8;font-family:'Liberation Mono','Noto Sans CJK SC',monospace;letter-spacing:-0.960px;">12</span>
<span style="left:489.1px;top:166.5px;font-size:17px;line-height:22px;color:#d4d4d4;font-family:'Liberation Mono','Noto Sans CJK SC',monospace;letter-spacing:-0.960px"><span style="color:#569cd6">class</span> <span style="color:#4ec9b0">DatasetUtil</span> <span style="color:#e86fb0">{</span></span>
<span style="left:439.02px;top:189.3px;font-size:17px;line-height:22px;color:#1c9bd8;font-family:'Liberation Mono','Noto Sans CJK SC',monospace;letter-spacing:-0.960px;">15</span>
<span style="left:489.1px;top:189.3px;font-size:17px;line-height:22px;color:#d4d4d4;font-family:'Liberation Mono','Noto Sans CJK SC',monospace;letter-spacing:-0.960px">    <span style="color:#569cd6">void</span> <span style="color:#dcdcaa">openDataset</span><span style="color:#179fff">()</span> <span style="color:#179fff">{</span></span>
<div style="left:626.5px;top:462px;width:240.5px;height:31px;background:transparent;border:4px solid #ff5268;border-radius:4.500px;box-sizing:border-box;"></div>
<div style="left:1792px;top:142px;width:100px;height:100px;opacity:.6">
<div style="left:0.0px;top:0px;width:7.1px;height:1.700px;background:#b8b8b8"></div>
<div style="left:8.2px;top:0px;width:4.1px;height:1.700px;background:#b8b8b8"></div>
<div style="left:0.0px;top:2px;width:7.1px;height:1.700px;background:#b8b8b8"></div>
<div style="left:8.2px;top:2px;width:14.3px;height:1.700px;background:#b0a0e8"></div>
<div style="left:0.0px;top:4px;width:7.1px;height:1.700px;background:#b8b8b8"></div>
<div style="left:8.2px;top:4px;width:14.3px;height:1.700px;background:#b0a0e8"></div>
<div style="left:0.0px;top:8px;width:7.1px;height:1.700px;background:#b8b8b8"></div>
<div style="left:8.2px;top:8px;width:14.3px;height:1.700px;background:#b0a0e8"></div>
<div style="left:23.5px;top:8px;width:20.4px;height:1.700px;background:#ce9178"></div>
<div style="left:0.0px;top:10px;width:7.1px;height:1.700px;background:#b8b8b8"></div>
<div style="left:8.2px;top:10px;width:13.3px;height:1.700px;background:#b0a0e8"></div>
<div style="left:22.4px;top:10px;width:34.7px;height:1.700px;background:#ce9178"></div>
<div style="left:0.0px;top:14px;width:8.2px;height:1.700px;background:#b8b8b8"></div>
<div style="left:9.2px;top:14px;width:23.5px;height:1.700px;background:#ce9178"></div>
<div style="left:0.0px;top:18px;width:9.2px;height:1.700px;background:#569cd6"></div>
<div style="left:10.2px;top:18px;width:18.4px;height:1.700px;background:#d4d4d4"></div>
<div style="left:29.6px;top:18px;width:1.0px;height:1.700px;background:#ffd700"></div>
<div style="left:0.0px;top:22px;width:5.1px;height:1.700px;background:#569cd6"></div>
<div style="left:6.1px;top:22px;width:11.2px;height:1.700px;background:#4ec9b0"></div>
<div style="left:18.4px;top:22px;width:1.0px;height:1.700px;background:#e86fb0"></div>
<div style="left:0.0px;top:24px;width:7.1px;height:1.700px;background:#569cd6"></div>
<div style="left:4.1px;top:28px;width:4.1px;height:1.700px;background:#569cd6"></div>
<div style="left:9.2px;top:28px;width:11.2px;height:1.700px;background:#dcdcaa"></div>
<div style="left:20.4px;top:28px;width:2.0px;height:1.700px;background:#179fff"></div>
<div style="left:23.5px;top:28px;width:1.0px;height:1.700px;background:#179fff"></div>
<div style="left:8.2px;top:32px;width:5.1px;height:1.700px;background:#569cd6"></div>
<div style="left:14.3px;top:32px;width:9.2px;height:1.700px;background:#569cd6"></div>
<div style="left:24.5px;top:32px;width:9.2px;height:1.700px;background:#d4d4d4"></div>
<div style="left:8.2px;top:36px;width:22.4px;height:1.700px;background:#2fa24f"></div>
<div style="left:8.2px;top:38px;width:11.2px;height:1.700px;background:#d4d4d4"></div>
<div style="left:20.4px;top:38px;width:11.2px;height:1.700px;background:#9cdcfe"></div>
<div style="left:34.7px;top:38px;width:14.3px;height:1.700px;background:#b0a0e8"></div>
<div style="left:8.2px;top:40px;width:11.2px;height:1.700px;background:#9cdcfe"></div>
<div style="left:19.4px;top:40px;width:7.1px;height:1.700px;background:#dcdcaa"></div>
<div style="left:27.5px;top:40px;width:13.3px;height:1.700px;background:#b0a0e8"></div>
<div style="left:8.2px;top:42px;width:14.3px;height:1.700px;background:#d4d4d4"></div>
<div style="left:23.5px;top:42px;width:4.1px;height:1.700px;background:#9cdcfe"></div>
<div style="left:28.6px;top:42px;width:11.2px;height:1.700px;background:#9cdcfe"></div>
<div style="left:41.8px;top:42px;width:14.3px;height:1.700px;background:#d4d4d4"></div>
<div style="left:8.2px;top:46px;width:11.2px;height:1.700px;background:#d4d4d4"></div>
<div style="left:19.4px;top:46px;width:5.1px;height:1.700px;background:#569cd6"></div>
<div style="left:25.5px;top:46px;width:7.1px;height:1.700px;background:#d4d4d4"></div>
<div style="left:8.2px;top:50px;width:18.4px;height:1.700px;background:#2fa24f"></div>
<div style="left:8.2px;top:52px;width:4.1px;height:1.700px;background:#569cd6"></div>
<div style="left:13.3px;top:52px;width:7.1px;height:1.700px;background:#9cdcfe"></div>
<div style="left:23.5px;top:52px;width:4.1px;height:1.700px;background:#9cdcfe"></div>
<div style="left:27.5px;top:52px;width:11.2px;height:1.700px;background:#dcdcaa"></div>
<div style="left:39.8px;top:52px;width:6.1px;height:1.700px;background:#ce9178"></div>
<div style="left:46.9px;top:52px;width:2.0px;height:1.700px;background:#d4d4d4"></div>
<div style="left:8.2px;top:56px;width:54.1px;height:1.700px;background:#2fa24f"></div>
<div style="left:8.2px;top:58px;width:24.5px;height:1.700px;background:#d4d4d4"></div>
<div style="left:32.6px;top:58px;width:5.1px;height:1.700px;background:#569cd6"></div>
<div style="left:37.7px;top:58px;width:10.2px;height:1.700px;background:#d4d4d4"></div>
<div style="left:8.2px;top:60px;width:7.1px;height:1.700px;background:#9cdcfe"></div>
<div style="left:15.3px;top:60px;width:8.2px;height:1.700px;background:#d4d4d4"></div>
<div style="left:24.5px;top:60px;width:8.2px;height:1.700px;background:#b5cea8"></div>
<div style="left:33.7px;top:60px;width:10.2px;height:1.700px;background:#b5cea8"></div>
<div style="left:44.9px;top:60px;width:14.3px;height:1.700px;background:#d4d4d4"></div>
<div style="left:8.2px;top:64px;width:24.5px;height:1.700px;background:#2fa24f"></div>
<div style="left:8.2px;top:66px;width:3.1px;height:1.700px;background:#c586c0"></div>
<div style="left:12.2px;top:66px;width:5.1px;height:1.700px;background:#569cd6"></div>
<div style="left:18.4px;top:66px;width:10.2px;height:1.700px;background:#d4d4d4"></div>
<div style="left:29.6px;top:66px;width:1.0px;height:1.700px;background:#ffd700"></div>
<div style="left:12.2px;top:68px;width:3.1px;height:1.700px;background:#c586c0"></div>
<div style="left:16.3px;top:68px;width:5.1px;height:1.700px;background:#569cd6"></div>
<div style="left:22.4px;top:68px;width:5.1px;height:1.700px;background:#9cdcfe"></div>
<div style="left:28.6px;top:68px;width:1.0px;height:1.700px;background:#e86fb0"></div>
<div style="left:16.3px;top:70px;width:13.3px;height:1.700px;background:#d4d4d4"></div>
<div style="left:30.6px;top:70px;width:3.1px;height:1.700px;background:#ce9178"></div>
<div style="left:34.7px;top:70px;width:5.1px;height:1.700px;background:#d4d4d4"></div>
<div style="left:12.2px;top:72px;width:1.0px;height:1.700px;background:#e86fb0"></div>
<div style="left:12.2px;top:74px;width:13.3px;height:1.700px;background:#d4d4d4"></div>
<div style="left:26.5px;top:74px;width:4.1px;height:1.700px;background:#ce9178"></div>
<div style="left:30.6px;top:74px;width:1.0px;height:1.700px;background:#d4d4d4"></div>
<div style="left:8.2px;top:76px;width:1.0px;height:1.700px;background:#ffd700"></div>
<div style="left:4.1px;top:82px;width:1.0px;height:1.700px;background:#179fff"></div>
<div style="left:0.0px;top:86px;width:2.0px;height:1.700px;background:#d4d4d4"></div>
<div style="left:0.0px;top:92px;width:1.0px;height:1.700px;background:#ffd700"></div>
<div style="left:2.0px;top:92px;width:21.4px;height:1.700px;background:#2fa24f"></div>
<div style="left:0.0px;top:96px;width:6.1px;height:1.700px;background:#b8b8b8"></div>
<div style="left:7.1px;top:96px;width:17.3px;height:1.700px;background:#2fa24f"></div>
</div>
<div style="left:1786px;top:150px;width:2px;height:8px;background:#0c8ed0;"></div>
<div style="left:1786px;top:172px;width:2px;height:52px;background:#0c8ed0;"></div>
<div style="left:1903px;top:142px;width:1px;height:480px;background:#383838;"></div>
<div style="left:1904px;top:142px;width:16px;height:1px;background:#383838;"></div>
<div style="left:1904px;top:169px;width:6px;height:28px;background:#0b5a82;"></div>
<div style="left:1904px;top:246px;width:6px;height:182px;background:#0b5a82;"></div>
<div style="left:1904px;top:379px;width:16px;height:6px;background:#4b4b18;"></div>
<div style="left:1904px;top:379px;width:6px;height:6px;background:#2e7a70;"></div>
<div style="left:1904px;top:377px;width:16px;height:2px;background:#b0b0b0;"></div>
<div style="left:853px;top:72px;width:214px;height:31px;background:#333333;border-radius:5px;box-shadow:0 0 8px 2px rgba(0,0,0,.36);"></div>
<div style="left:865.5px;top:82px;width:2.5px;height:2.5px;background:#8a8a8a;"></div>
<div style="left:865.5px;top:87px;width:2.5px;height:2.5px;background:#8a8a8a;"></div>
<div style="left:865.5px;top:92px;width:2.5px;height:2.5px;background:#8a8a8a;"></div>
<div style="left:870.5px;top:82px;width:2.5px;height:2.5px;background:#8a8a8a;"></div>
<div style="left:870.5px;top:87px;width:2.5px;height:2.5px;background:#8a8a8a;"></div>
<div style="left:870.5px;top:92px;width:2.5px;height:2.5px;background:#8a8a8a;"></div>
<svg style="left:883.2px;top:77.400px" width="20" height="20" viewBox="0 0 16 16" fill="none" stroke="#75beff" stroke-width="1.550" stroke-linejoin="round"><path d="M2.700 2v12"/><path d="M5.800 2.500v11L14 8z"/></svg>
<svg style="left:914.2px;top:77.400px" width="20" height="20" viewBox="0 0 16 16" fill="none" stroke="#75beff" stroke-width="1.550" stroke-linejoin="round"><path d="M2.500 8.500a5.500 5.500 0 0 1 10.600-2.000"/><path d="M13.600 2.300v4.400H9.200"/><circle cx="8" cy="12" r="1.700" fill="#75beff" stroke="none"/></svg>
<svg style="left:945.2px;top:77.400px" width="20" height="20" viewBox="0 0 16 16" fill="none" stroke="#75beff" stroke-width="1.550" stroke-linejoin="round"><path d="M8 1v8M4.600 5.800 8 9.200l3.400-3.400"/><circle cx="8" cy="13" r="1.700" fill="#75beff" stroke="none"/></svg>
<svg style="left:976.2px;top:77.400px" width="20" height="20" viewBox="0 0 16 16" fill="none" stroke="#75beff" stroke-width="1.550" stroke-linejoin="round"><path d="M8 9.500v-8M4.600 4.900 8 1.500l3.400 3.400"/><circle cx="8" cy="13" r="1.700" fill="#75beff" stroke="none"/></svg>
<svg style="left:1007.2px;top:77.400px" width="20" height="20" viewBox="0 0 16 16" fill="none" stroke="#5fd08a" stroke-width="1.550" stroke-linejoin="round"><path d="M3.200 5.200A5.500 5.500 0 1 1 2.500 8"/><path d="M2.800 1.500v4h4"/></svg>
<svg style="left:1038.2px;top:77.400px" width="20" height="20" viewBox="0 0 16 16" fill="none" stroke="#f5824f" stroke-width="1.550" stroke-linejoin="round"><rect x="2.500" y="2.500" width="11" height="11" rx=".5"/></svg>
<div style="left:58px;top:622px;width:1862px;height:392px;background:#1e1e1e;"></div>
<div style="left:58px;top:622px;width:1862px;height:1px;background:#454545;"></div>
<span style="left:82px;top:635.0px;font-size:13.2px;line-height:18px;color:#969696;letter-spacing:-0.188px;">问题</span>
<span style="left:137px;top:635.0px;font-size:13.2px;line-height:18px;color:#969696;letter-spacing:-0.188px;">输出</span>
<span style="left:247px;top:635.0px;font-size:13.2px;line-height:18px;color:#969696;letter-spacing:-0.188px;">端口</span>
<span style="left:302px;top:635.0px;font-size:11.88px;line-height:18px;color:#969696;letter-spacing:-0.3px;">SEARCH ERROR</span>
<span style="left:423px;top:635.0px;font-size:13.2px;line-height:18px;color:#969696;letter-spacing:-0.188px;">调试控制台</span>
<span style="left:192px;top:635.0px;font-size:13.2px;line-height:18px;color:#e7e7e7;letter-spacing:-0.188px;">终端</span>
<div style="left:191px;top:655px;width:28px;height:1.5px;background:#e7e7e7;"></div>
<svg style="left:1804px;top:634px" width="18" height="18" viewBox="0 0 18 18" stroke="#cccccc" stroke-width="1.300"><path d="M9 1v16M1 9h16"/></svg>
<svg style="left:1826.0px;top:636.5px" width="14" height="14" viewBox="0 0 16 16" fill="none" stroke="#cccccc" stroke-width="1.200"><path d="M3.500 6l4.500 4.500L12.500 6"/></svg>
<span style="left:1853px;top:631.5px;font-size:17px;line-height:24px;color:#cccccc;letter-spacing:0.300px;font-weight:700;">···</span>
<svg style="left:1886px;top:637px" width="12" height="12" viewBox="0 0 12 12" stroke="#cccccc" stroke-width="1.300"><path d="M1 1l10 10M11 1 1 11"/></svg>
<pre style="left:81.500px;top:700.500px;font-family:'Liberation Mono','Noto Sans CJK SC',monospace;font-size:17px;line-height:21px;color:#cccccc;letter-spacing:-1.200px"> 0 0 0 0 0 0 0 0 0 0 0 0 0 0 0 0 0 0 0 0 0 0 0 0 0 0 0 0 0 0 0 0 0 0 0 0 0 0 0 0 0 0 0 0 0 0 0 0 0 0 0 0 0 0 0 0 0 0 0 0 0 0 0 0 0 0 0 0 0 0 0 0 0 0 0 0 0 0 0 0 0 0 0 0 0 0 0 0 0
 0 0 0 0 0 0 0 0 0 0 0 0 0 0 0 0 0 0 0 0 0 0 0 0 0 0 0 0 0 0 0 0 0 0 0 0 0 0 0 0 0 0 0 0 0 0 0 0 0 0 0 0 0 0 0 0 0 0 0 0 0 0 0 0 0 0 0 0 0 0 0 0 0 0 0 0 0 0 0 0 0 0 0 0 0 0 0 0 0
 0 0 0 0 0 0 0 0 0 0 0 0 0 0 0 0 0 0 0 0 0 0 0 0 0 0 0 0 0 0 0 0 0 0 0 0 0 3 1 0 0 7 0 37 0 0 0 0 0 0 0 0 0 0 0 0 0 0 0 1 2 0 27 84 11 0 0 0 0 0 0 119 0 0 0 0 0 0 0 0 0 0 0 0 0 0
 0 1 0 0 88 143 110 0 0 0 0 22 93 106 0 0 0 0 0 0 0 0 0 0 0 0 0 0 0 4 0 53 129 120 147 175 157 166 135 154 168 140 0 0 0 0 0 0 0 0 0 0 0 0 0 0 2 0 11 137 130 128 160 176 159 167
178 149 151 144 0 0 0 0 0 0 0 0 1 0 2 1 0 3 0 0 115 114 106 137 168 153 156 165 167 143 157 158 11 0 0 0 0 0 1 0 0 0 0 0 3 0 0 89 139 90 94 153 149 131 151 169 172 143 159 169 48
 0 0 0 0 0 0 0 2 4 1 0 0 0 98 136 110 109 110 162 135 144 149 159 167 144 158 169 119 0 0 0 2 2 1 2 0 0 0 0 26 108 117 99 111 117 136 156 134 154 154 156 160 141 147 156 178 0 3
0 0 0 0 0 0 21 53 92 117 111 103 115 129 134 143 154 165 170 154 151 154 143 138 150 165 43 0 0 23 54 65 76 85 118 128 123 111 113 118 127 125 139 133 136 160 140 155 161 144 155
 172 161 189 62 0 68 94 90 111 114 111 114 115 127 135 136 143 126 127 151 154 143 148 125 162 162 144 138 153 162 196 58 70 169 129 104 98 100 94 97 98 102 108 106 119 120 129 1
49 156 167 190 190 196 198 198 187 197 189 184 36 16 126 171 188 188 184 171 153 135 120 126 127 146 185 195 209 208 255 209 177 245 252 251 251 247 220 206 49 0 0 0 12 67 106 16
4 185 199 210 211 210 208 190 150 82 8 0 0 0 178 208 188 175 162 158 151 11 0 0 0 0 0 0 0 0 0 0 0 0 0 0 0 0 0 0 0 0 0 0 0 0 0 0 0 0 0 0 0 0 0 0 0 0 0 0 0 0 0 0 0 0 0 0 0 0 0 0 0
0 0 0 0 0 0 0 0 0 0 0 0 0 0 0 0 0 0 0 0 0 0 0 0 0 0 0 0 0 0 0 0 0 0 0 0 0 0 0 0 0 0 0 0 0 0 0 0 0 0 0 0 0 0 0 0 0 0 0 0 0 0 0 0 0 0 0 0 0 0 0 0 0 0 0 0 0 0 0 0 0 0 0 0 0 0 0 0 0
0 0 0 0 0 0 0 0 0 0 0 0 0 0 0 0 0 0 0 0 0 0 0 0 0 0 0 0</pre>
<div style="left:82px;top:951px;width:9px;height:21px;background:#cccccc;"></div>
<div style="left:749px;top:740px;width:101px;height:26px;background:transparent;border:4px solid #ff5268;border-radius:4.500px;box-sizing:border-box;"></div>
<div style="left:1684px;top:678px;width:1px;height:336px;background:#383838;"></div>
<div style="left:1684px;top:678px;width:16px;height:1px;background:#383838;"></div>
<div style="left:1700px;top:664px;width:1px;height:350px;background:#454545;"></div>
<div style="left:1701px;top:690px;width:219px;height:27px;background:#37373d;"></div>
<svg style="left:1713px;top:668px" width="18" height="19" viewBox="0 0 18 19" fill="none" stroke="#cccccc" stroke-width="1.200" stroke-linejoin="round"><path d="M9 1.200 16 5v9L9 17.800 2 14V5z"/><path d="M9 17.800V9.500L16 5" /><path d="M9.500 10 15.500 6.500v7.200L9.500 17z" fill="#cccccc" fill-opacity=".55" stroke="none"/></svg>
<span style="left:1736px;top:667.0px;font-size:15.6px;line-height:22px;color:#cccccc;letter-spacing:-0.207px;">bash</span>
<span style="left:1776px;top:670.0px;font-size:13.2px;line-height:18px;color:#8c8c8c;letter-spacing:0.244px;">HighFive</span>
<svg style="left:1711px;top:692px" width="22" height="22" viewBox="0 0 16 16" fill="none" stroke="#cccccc" stroke-width="1"><ellipse cx="8" cy="9" rx="3.300" ry="4.300"/><path d="M5.500 4.800a2.500 2.500 0 0 1 5 0M4.700 7 2.500 5.500M11.300 7l2.200-1.500M4.700 9.500H2M11.300 9.500H14M5 12l-2.200 1.800M11 12l2.200 1.800M6.500 7.500l3 3M9.500 7.500l-3 3"/></svg>
<span style="left:1736px;top:693.0px;font-size:15.6px;line-height:22px;color:#cccccc;letter-spacing:-0.126px;">cppdbg: dataset_util_te...</span>
<div style="left:0px;top:1014px;width:1920px;height:26px;background:#ee6620;"></div>
<div style="left:0px;top:1014px;width:167px;height:26px;background:#008573;"></div>
<svg style="left:13px;top:1018.0px" width="14" height="16" viewBox="0 0 14 16" fill="none" stroke="#ffffff" stroke-width="1.3" stroke-linejoin="round" stroke-linecap="round"><path d="M1.500 6 6 10.500 1.500 15M12.500 1.500 8 6 12.500 10.500"/></svg>
<span style="left:33px;top:1018.0px;font-size:14.4px;line-height:20px;color:#ffffff;letter-spacing:-0.258px;">WSL: Ubuntu-18.04</span>
<svg style="left:175px;top:1019.0px" width="16" height="16" viewBox="0 0 16 16" fill="none" stroke="#ffffff" stroke-width="1.1" stroke-linejoin="round" stroke-linecap="round"><circle cx="4.500" cy="3" r="1.900"/><circle cx="4.500" cy="13" r="1.900"/><circle cx="11.500" cy="5.500" r="1.900"/><path d="M4.500 4.900v6.200M11.500 7.400c0 3-7 1.500-7 3.700"/></svg>
<span style="left:196px;top:1018.0px;font-size:14.4px;line-height:20px;color:#ffffff;letter-spacing:-0.228px;">master*</span>
<svg style="left:251px;top:1019.0px" width="20" height="16" viewBox="0 0 20 16" fill="none" stroke="#ffffff" stroke-width="1.3" stroke-linejoin="round" stroke-linecap="round"><path d="M3 7.500A6.200 5.500 0 0 1 15 6M17 8.500A6.200 5.500 0 0 1 5 10"/><path d="M15.300 2.500V6.200h-3.700M4.700 13.500V9.800h3.700"/></svg>
<svg style="left:285px;top:1018.5px" width="17" height="17" viewBox="0 0 16 16" fill="none" stroke="#ffffff" stroke-width="1.1" stroke-linejoin="round" stroke-linecap="round"><circle cx="8" cy="8" r="6.800"/><path d="M5.300 5.300l5.400 5.400M10.700 5.300l-5.400 5.400"/></svg>
<span style="left:306px;top:1018.0px;font-size:14.4px;line-height:20px;color:#ffffff;">0</span>
<svg style="left:317px;top:1018.5px" width="17" height="17" viewBox="0 0 16 16" fill="none" stroke="#ffffff" stroke-width="1.1" stroke-linejoin="round" stroke-linecap="round"><path d="M8 1.800 15 14.200H1z"/><path d="M8 6.300v4M8 11.700v.8"/></svg>
<span style="left:339px;top:1018.0px;font-size:14.4px;line-height:20px;color:#ffffff;">0</span>
<svg style="left:366px;top:1018.5px" width="17" height="17" viewBox="0 0 16 16" fill="none" stroke="#ffffff" stroke-width="1.1" stroke-linejoin="round" stroke-linecap="round"><path d="M8 6.500 4.500 15M8 6.500 11.500 15M5.800 12h4.400"/><circle cx="8" cy="5.500" r="1.200"/><path d="M4.800 2.500a4.500 4.500 0 0 0 0 6M11.200 2.500a4.500 4.500 0 0 1 0 6M2.800 1a7 7 0 0 0 0 9M13.200 1a7 7 0 0 1 0 9"/></svg>
<span style="left:387px;top:1018.0px;font-size:14.4px;line-height:20px;color:#ffffff;">0</span>
<svg style="left:411px;top:1018.5px" width="18" height="17" viewBox="0 0 17 16" fill="none" stroke="#ffffff" stroke-width="1.1" stroke-linejoin="round" stroke-linecap="round"><path d="M6.500 7V2.200L15.800 8l-5 3.200"/><ellipse cx="5.500" cy="11.800" rx="2.300" ry="3"/><path d="M3.200 10.500h4.600M3.200 9.500 1.800 8.400M7.800 9.500l1.400-1.100M3.200 12.200H1.300M7.800 12.200h1.900M3.500 14l-1.500 1.200M7.500 14 9 15.200"/></svg>
<span style="left:434px;top:1018.0px;font-size:14.4px;line-height:20px;color:#ffffff;letter-spacing:0.028px;">debug (hnswlib-master)</span>
<svg style="left:604px;top:1018.5px" width="17" height="17" viewBox="0 0 16 16" fill="none" stroke="#ffffff" stroke-width="1.1" stroke-linejoin="round" stroke-linecap="round"><path d="M6.52 3.22 L6.61 1.14 L9.39 1.14 L9.48 3.22 L10.33 3.58 L11.87 2.17 L13.83 4.13 L12.42 5.67 L12.78 6.52 L14.86 6.61 L14.86 9.39 L12.78 9.48 L12.42 10.33 L13.83 11.87 L11.87 13.83 L10.33 12.42 L9.48 12.78 L9.39 14.86 L6.61 14.86 L6.52 12.78 L5.67 12.42 L4.13 13.83 L2.17 11.87 L3.58 10.33 L3.22 9.48 L1.14 9.39 L1.14 6.61 L3.22 6.52 L3.58 5.67 L2.17 4.13 L4.13 2.17 L5.67 3.58Z"/><circle cx="8" cy="8" r="2"/></svg>
<span style="left:625px;top:1018.0px;font-size:14.3px;line-height:20px;color:#ffffff;letter-spacing:-0.3px;">生成</span>
<svg style="left:673px;top:1018.0px" width="18" height="18" viewBox="0 0 16 16" fill="none" stroke="#ffffff" stroke-width="1.1" stroke-linejoin="round" stroke-linecap="round"><ellipse cx="8" cy="9" rx="3.300" ry="4.500"/><path d="M4.700 7.500h6.600M5.500 4.800a2.500 2.500 0 0 1 5 0M4.700 6.500 2.500 5M11.300 6.500 13.500 5M4.700 9.500H2M11.300 9.500H14M5 12l-2.200 1.800M11 12l2.200 1.800"/></svg>
<svg style="left:710px;top:1019.0px" width="15" height="16" viewBox="0 0 16 16" fill="none" stroke="#ffffff" stroke-width="1.2" stroke-linejoin="round" stroke-linecap="round"><path d="M3 2v12l10-6z"/></svg>
<span style="left:745px;top:1018.0px;font-size:14.31px;line-height:20px;color:#ffffff;letter-spacing:-0.3px;">Share Code Link</span>
<span style="left:866px;top:1018.0px;font-size:14.4px;line-height:20px;color:#ffffff;letter-spacing:-0.129px;">Generate Commit Message</span>
<span style="left:1058px;top:1018.0px;font-size:14.23px;line-height:20px;color:#ffffff;letter-spacing:-0.3px;">Search Error</span>
<div style="left:1343px;top:1014px;width:41px;height:26px;background:#7a3410;"></div>
<svg style="left:1355px;top:1018.0px" width="18" height="18" viewBox="0 0 16 16" fill="none" stroke="#ffffff" stroke-width="1.5" stroke-linejoin="round" stroke-linecap="round"><circle cx="7" cy="7" r="5"/><path d="M10.700 10.700 15 15M4.800 7h4.400M7 4.800v4.400"/></svg>
<span style="left:1394px;top:1018.0px;font-size:14.4px;line-height:20px;color:#ffffff;letter-spacing:-0.273px;">行 35，列 1</span>
<span style="left:1487px;top:1018.0px;font-size:14.4px;line-height:20px;color:#ffffff;letter-spacing:-0.156px;">空格: 4</span>
<span style="left:1550px;top:1018.0px;font-size:13.95px;line-height:20px;color:#ffffff;letter-spacing:-0.3px;">UTF-8</span>
<span style="left:1607px;top:1018.0px;font-size:14.4px;line-height:20px;color:#ffffff;transform:scaleX(.85);transform-origin:0 50%;">LF</span>
<span style="left:1640px;top:1016.2px;font-size:14.4px;line-height:20px;color:#ffffff;letter-spacing:1.500px;">{}</span>
<span style="left:1662px;top:1018.0px;font-size:14.4px;line-height:20px;color:#ffffff;letter-spacing:-0.068px;">C++</span>
<svg style="left:1706px;top:1016.0px" width="21" height="21" viewBox="0 0 16 16" fill="none" stroke="#ffffff" stroke-width="1.1" stroke-linejoin="round" stroke-linecap="round"><path d="M10.800 0.800 2.500 9.300h4.800L5 15.500 14 6.500H9z" stroke="#1e1e1e" fill="#ffcc00" stroke-width=".9"/></svg>
<span style="left:1730px;top:1018.0px;font-size:14.4px;line-height:20px;color:#ffffff;letter-spacing:-0.284px;">AI Code Chat</span>
<span style="left:1833px;top:1018.0px;font-size:14.4px;line-height:20px;color:#ffffff;letter-spacing:-0.281px;">Linux</span>
<svg style="left:1885px;top:1018.0px" width="18" height="18" viewBox="0 0 16 16" fill="none" stroke="#ffffff" stroke-width="1.1" stroke-linejoin="round" stroke-linecap="round"><path d="M3.500 12.500c1-1.300 1-2.700 1-5a4 4 0 0 1 8 0c0 2.300 0 3.700 1 5zM7 14.200a1.500 1.500 0 0 0 3 0"/><circle cx="12.600" cy="3.600" r="3.300" fill="#ffffff" stroke="#ee6620" stroke-width=".8"/></svg>
</body></html>
